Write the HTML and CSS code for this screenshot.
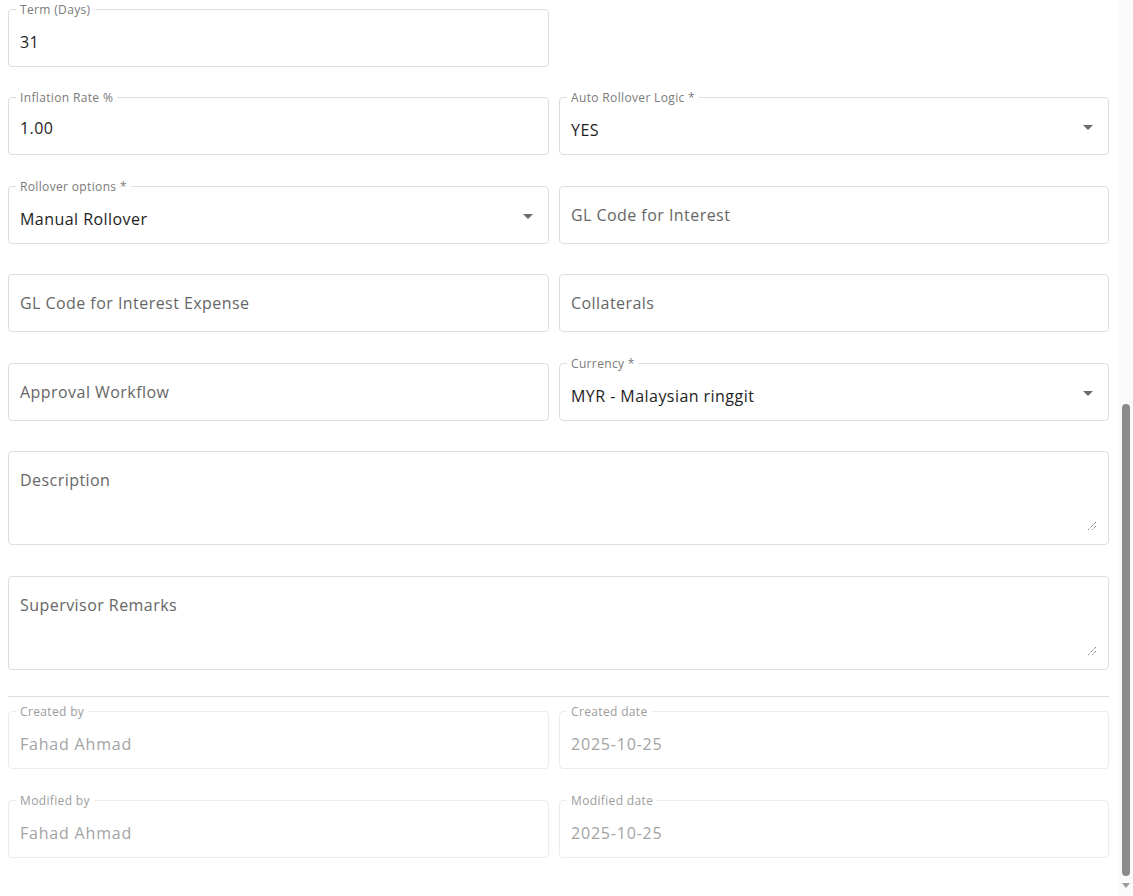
FILE: index.html
```html
<!DOCTYPE html>
<html lang="en">
<head>
<meta charset="utf-8">
<title>Deposit Product Form</title>
<link rel="stylesheet" href="styles.css">
</head>
<body>
<div class="page">
  <main class="form">
    <div class="grid">
      <div class="field labeled">
        <span class="label">Term (Days)</span>
        <div class="value">31</div>
      </div>
      <div class="empty"></div>

      <div class="field labeled">
        <span class="label">Inflation Rate %</span>
        <div class="value num">1.00</div>
      </div>
      <div class="field labeled select">
        <span class="label">Auto Rollover Logic *</span>
        <div class="value">YES</div>
        <svg class="arrow" viewBox="0 0 24 24" width="24" height="24"><path d="M7 10l5 5 5-5z"/></svg>
      </div>

      <div class="field labeled select">
        <span class="label">Rollover options *</span>
        <div class="value">Manual Rollover</div>
        <svg class="arrow" viewBox="0 0 24 24" width="24" height="24"><path d="M7 10l5 5 5-5z"/></svg>
      </div>
      <div class="field">
        <div class="placeholder">GL Code for Interest</div>
      </div>

      <div class="field">
        <div class="placeholder">GL Code for Interest Expense</div>
      </div>
      <div class="field">
        <div class="placeholder">Collaterals</div>
      </div>

      <div class="field">
        <div class="placeholder">Approval Workflow</div>
      </div>
      <div class="field labeled select">
        <span class="label">Currency *</span>
        <div class="value">MYR - Malaysian ringgit</div>
        <svg class="arrow" viewBox="0 0 24 24" width="24" height="24"><path d="M7 10l5 5 5-5z"/></svg>
      </div>

      <div class="field area span2">
        <div class="placeholder">Description</div>
        <svg class="grip" viewBox="0 0 10 10" width="10" height="10"><path d="M9 1L1 9M9 5L5 9"/></svg>
      </div>

      <div class="field area span2 sup">
        <div class="placeholder">Supervisor Remarks</div>
        <svg class="grip" viewBox="0 0 10 10" width="10" height="10"><path d="M9 1L1 9M9 5L5 9"/></svg>
      </div>
    </div>

    <hr class="divider">

    <div class="grid meta">
      <div class="field labeled disabled">
        <span class="label">Created by</span>
        <div class="value">Fahad Ahmad</div>
      </div>
      <div class="field labeled disabled">
        <span class="label">Created date</span>
        <div class="value">2025-10-25</div>
      </div>
      <div class="field labeled disabled">
        <span class="label">Modified by</span>
        <div class="value">Fahad Ahmad</div>
      </div>
      <div class="field labeled disabled">
        <span class="label">Modified date</span>
        <div class="value">2025-10-25</div>
      </div>
    </div>
  </main>
  <aside class="scrollbar">
    <div class="thumb"></div>
    <svg class="down" viewBox="0 0 8 5" width="8" height="5"><path d="M0 0h8L4 5z"/></svg>
  </aside>
</div>
</body>
</html>
```

FILE: styles.css
```css
* { box-sizing: border-box; }

html, body {
  margin: 0;
  padding: 0;
  background: #ffffff;
}

body {
  font-family: "Open Sans", "Liberation Sans", sans-serif;
  color: #1f1f1f;
  overflow: hidden;
}

.page {
  display: flex;
  width: 1133px;
  height: 896px;
}

.form {
  width: 1119px;
  padding: 8.5px 0 0 8px;
}

.grid {
  display: grid;
  grid-template-columns: 541px 550px;
  column-gap: 10px;
  row-gap: 30.5px;
  width: 1101px;
}

.span2 { grid-column: 1 / span 2; }

.field {
  position: relative;
  height: 58px;
  border: 1px solid #dedede;
  border-radius: 4px;
  background: #fff;
  padding: 0 11px;
}

.label {
  position: absolute;
  left: 7px;
  top: -7px;
  padding: 0 4px;
  background: #fff;
  font-size: 12px;
  line-height: 14px;
  color: #7a7a7a;
  letter-spacing: 0.35px;
  white-space: nowrap;
}

.value, .placeholder {
  font-size: 16px;
  line-height: 20px;
  letter-spacing: 0.45px;
  white-space: nowrap;
}

.value {
  padding-top: 22px;
  color: #1e1e1e;
}

.value.num { padding-top: 20px; }

.placeholder {
  padding-top: 18px;
  color: #666666;
}

.select .value { padding-top: 22px; }

.arrow {
  position: absolute;
  right: 8px;
  top: 17px;
  fill: #6b6b6b;
}

.area { height: 94px; }

.area .placeholder { padding-top: 18px; }

.grip {
  position: absolute;
  right: 11px;
  bottom: 13px;
  stroke: #555;
  stroke-width: 1;
  stroke-dasharray: 1 1;
  fill: none;
}

.sup { margin-top: 0.5px; }

.divider {
  width: 1101px;
  margin: 26px 0 14px 0;
  border: 0;
  border-top: 1px solid #dcdcdc;
  height: 0;
}

.meta { row-gap: 31px; }

.disabled { border-color: #ececec; }

.disabled .label { color: #9c9c9c; }

.disabled .value { color: #a3a3a3; letter-spacing: 0.8px; }

.scrollbar {
  position: relative;
  width: 14px;
  height: 896px;
  background: #fafafa;
  display: flex;
  flex-direction: column;
  align-items: center;
  padding-top: 404px;
}

.thumb {
  width: 8px;
  height: 472px;
  border-radius: 4px;
  background: #8b8b8b;
}

.down {
  margin-top: 7px;
  fill: #9a9a9a;
}
```
